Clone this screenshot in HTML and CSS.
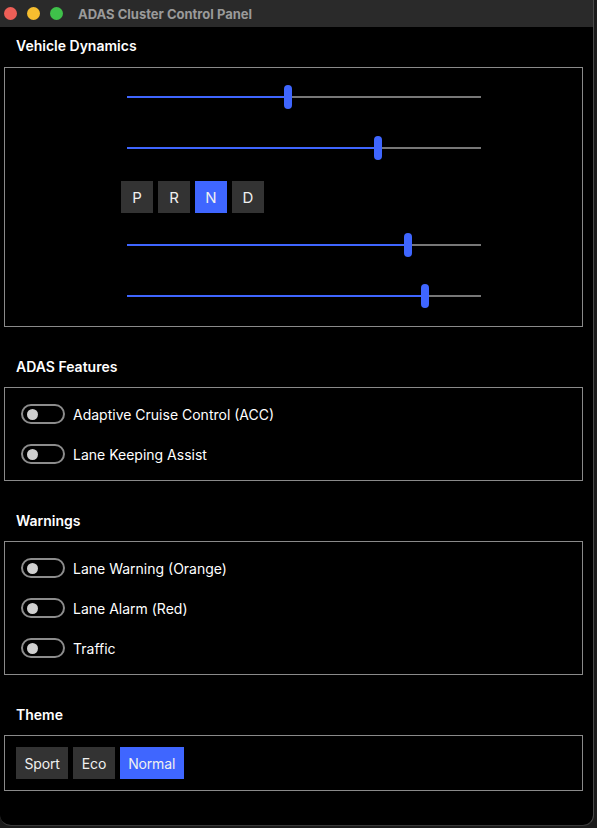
FILE: index.html
```html
<!DOCTYPE html>
<html lang="en">
<head>
<meta charset="utf-8">
<title>ADAS Cluster Control Panel</title>
<link rel="stylesheet" href="styles.css">
</head>
<body>
<div class="window">
  <div class="titlebar">
    <div class="lights">
      <span class="light red"></span>
      <span class="light yellow"></span>
      <span class="light green"></span>
    </div>
    <div class="title">ADAS Cluster Control Panel</div>
  </div>
  <div class="content">
    <h2 class="heading first">Vehicle Dynamics</h2>
    <div class="box dynamics">
      <div class="slider"><div class="track"><div class="fill" style="width:45.5%"></div><div class="thumb" style="left:45.5%"></div></div></div>
      <div class="slider"><div class="track"><div class="fill" style="width:71%"></div><div class="thumb" style="left:71%"></div></div></div>
      <div class="gears">
        <button class="btn">P</button>
        <button class="btn">R</button>
        <button class="btn active">N</button>
        <button class="btn">D</button>
      </div>
      <div class="slider"><div class="track"><div class="fill" style="width:79.5%"></div><div class="thumb" style="left:79.5%"></div></div></div>
      <div class="slider"><div class="track"><div class="fill" style="width:84.2%"></div><div class="thumb" style="left:84.2%"></div></div></div>
    </div>

    <h2 class="heading">ADAS Features</h2>
    <div class="box toggles">
      <label class="row"><span class="switch"><span class="knob"></span></span><span class="label">Adaptive Cruise Control (ACC)</span></label>
      <label class="row"><span class="switch"><span class="knob"></span></span><span class="label">Lane Keeping Assist</span></label>
    </div>

    <h2 class="heading">Warnings</h2>
    <div class="box toggles">
      <label class="row"><span class="switch"><span class="knob"></span></span><span class="label">Lane Warning (Orange)</span></label>
      <label class="row"><span class="switch"><span class="knob"></span></span><span class="label">Lane Alarm (Red)</span></label>
      <label class="row"><span class="switch"><span class="knob"></span></span><span class="label">Traffic</span></label>
    </div>

    <h2 class="heading">Theme</h2>
    <div class="box theme">
      <button class="btn wide">Sport</button>
      <button class="btn wide">Eco</button>
      <button class="btn wide active">Normal</button>
    </div>
  </div>
</div>
</body>
</html>
```

FILE: styles.css
```css
* { box-sizing: border-box; }
html, body { margin: 0; padding: 0; }
body {
  background: #1b1b1b;
  width: 597px;
  height: 828px;
  overflow: hidden;
  font-family: Inter, "Liberation Sans", sans-serif;
  color: #ffffff;
}
.window {
  width: 594px;
  height: 826px;
  background: #000000;
  border-right: 1px solid #4a4a4a;
  border-bottom: 1px solid #3a3a3a;
  border-radius: 0 0 11px 11px;
  overflow: hidden;
}
.titlebar {
  height: 27px;
  background: #2a2a2a;
  display: flex;
  align-items: center;
}
.lights {
  display: flex;
  gap: 10px;
  padding-left: 4px;
}
.light {
  width: 13px;
  height: 13px;
  border-radius: 50%;
  display: block;
}
.red { background: #ee5f57; }
.yellow { background: #f6be2f; }
.green { background: #3fc14a; }
.title {
  margin-left: 15px;
  font-size: 13px;
  font-weight: 700;
  color: #9a9a9a;
}
.content {
  padding: 0 10px 0 4px;
}
.heading {
  margin: 30px 0 10px 12px;
  font-size: 14px;
  font-weight: 600;
  line-height: 20px;
}
.heading.first { margin-top: 9px; margin-bottom: 11px; }
.box {
  border: 1px solid #8a8a8a;
}
.dynamics {
  padding: 17px 0 18px 116px;
}
.slider {
  height: 24px;
  width: 354px;
  margin-left: 6px;
  display: flex;
  align-items: center;
}
.slider + .slider { margin-top: 27px; }
.track {
  position: relative;
  width: 100%;
  height: 2px;
  background: #777777;
}
.fill {
  height: 2px;
  background: #3f66ff;
}
.thumb {
  position: absolute;
  top: -11px;
  width: 8px;
  height: 24px;
  margin-left: -4px;
  border-radius: 4px;
  background: #3f66ff;
}
.gears {
  display: flex;
  gap: 5px;
  margin: 21px 0 20px;
}
.btn {
  height: 32px;
  min-width: 32px;
  border: none;
  border-radius: 0;
  background: #333333;
  color: #f0f0f0;
  font-family: Inter, "Liberation Sans", sans-serif;
  font-size: 15px;
  padding: 0;
}
.btn.active { background: #3f66ff; }
.btn.wide {
  font-size: 14px;
  padding: 0 8.5px;
  letter-spacing: -0.15px;
}
.toggles {
  padding: 16px 16px;
  display: flex;
  flex-direction: column;
  gap: 20px;
}
.row {
  display: flex;
  align-items: center;
  height: 20px;
  gap: 8px;
}
.switch {
  width: 44px;
  height: 20px;
  border: 2px solid #8c8c8c;
  border-radius: 10px;
  display: flex;
  align-items: center;
  padding-left: 4px;
}
.knob {
  width: 11px;
  height: 11px;
  border-radius: 50%;
  background: #cfcfcf;
}
.label {
  font-size: 14px;
  color: #ffffff;
}
.theme {
  padding: 11px;
  display: flex;
  gap: 5px;
}
```
